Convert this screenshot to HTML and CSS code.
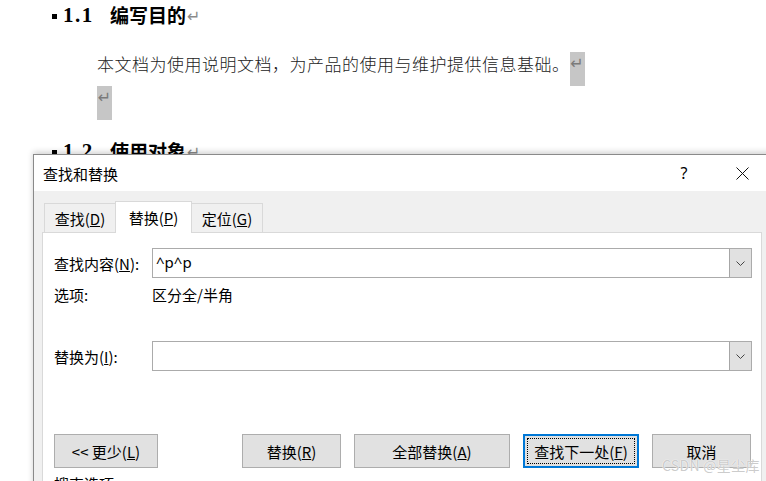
FILE: index.html
```html
<!DOCTYPE html>
<html lang="zh-CN">
<head>
<meta charset="utf-8">
<link rel="stylesheet" href="styles.css">
</head>
<body>
<div class="doc">
  <div class="h h1"><span class="bullet"></span><span class="num">1.1</span><span class="ht">编写目的</span><span class="ret">↵</span></div>
  <div class="para"><span class="ptext">本文档为使用说明文档，为产品的使用与维护提供信息基础。</span><span class="mark">↵</span></div>
  <div class="para"><span class="mark">↵</span></div>
  <div class="h h2"><span class="bullet"></span><span class="num">1.2</span><span class="ht">使用对象</span><span class="ret">↵</span></div>
</div>

<div class="dialog">
  <div class="titlebar">
    <span class="title">查找和替换</span>
    <span class="help">?</span>
    <span class="close"><svg width="13" height="13" viewBox="0 0 13 13"><path d="M0.5 0.5 L12.5 12.5 M12.5 0.5 L0.5 12.5" stroke="#111" stroke-width="1" fill="none"/></svg></span>
  </div>
  <div class="tabs">
    <div class="tab tab-first">查找(<u>D</u>)</div>
    <div class="tab tab-active">替换(<u>P</u>)</div>
    <div class="tab tab-last">定位(<u>G</u>)</div>
  </div>
  <div class="panel">
    <div class="row">
      <span class="label">查找内容(<u>N</u>):</span>
      <div class="combo"><span class="ctext">^p^p</span><span class="drop"><svg width="9" height="5" viewBox="0 0 9 5"><path d="M0.5 0.5 L4.5 4.5 L8.5 0.5" stroke="#444" stroke-width="1" fill="none"/></svg></span></div>
    </div>
    <div class="row opt">
      <span class="label">选项:</span>
      <span class="optval">区分全/半角</span>
    </div>
    <div class="row repl">
      <span class="label">替换为(<u>I</u>):</span>
      <div class="combo"><span class="ctext"></span><span class="drop"><svg width="9" height="5" viewBox="0 0 9 5"><path d="M0.5 0.5 L4.5 4.5 L8.5 0.5" stroke="#444" stroke-width="1" fill="none"/></svg></span></div>
    </div>
    <div class="buttons">
      <button class="btn b-less">&lt;&lt; 更少(<u>L</u>)</button>
      <div class="bgroup">
        <button class="btn b-rep">替换(<u>R</u>)</button>
        <button class="btn b-all">全部替换(<u>A</u>)</button>
        <button class="btn b-next">查找下一处(<u>F</u>)</button>
        <button class="btn b-cancel">取消</button>
      </div>
    </div>
    <div class="more">搜索选项</div>
    <div class="watermark">CSDN @星尘库</div>
  </div>
</div>
</body>
</html>
```

FILE: styles.css
```css
* { box-sizing: border-box; }
html, body {
  margin: 0;
  padding: 0;
  width: 766px;
  height: 481px;
  overflow: hidden;
  background: #fff;
}
body {
  position: relative;
  font-family: "Noto Sans CJK SC", sans-serif;
  color: #000;
}

/* document */
.h {
  display: flex;
  align-items: center;
  height: 30px;
  padding-left: 52px;
}
.bullet {
  width: 5px;
  height: 5px;
  background: #000;
  margin-top: 2px;
}
.num {
  width: 53px;
  padding-left: 6px;
  font-family: "Liberation Serif", serif;
  font-weight: bold;
  font-size: 21px;
  letter-spacing: 1.5px;
}
.ht {
  font-family: "Noto Sans CJK SC", sans-serif;
  font-weight: 700;
  font-size: 19px;
  line-height: 30px;
}
.ret {
  font-family: "DejaVu Sans", sans-serif;
  font-size: 16px;
  color: #8a8a8a;
  margin-left: 1px;
  margin-top: 2px;
}
.h2 { margin-top: 16px; }
.para {
  display: flex;
  align-items: flex-start;
  height: 34px;
  padding-left: 97px;
}
.h1 + .para { margin-top: 22px; }
.ptext {
  font-size: 17px;
  letter-spacing: 0.5px;
  line-height: 24px;
  color: #222;
  font-weight: 300;
}
.mark {
  display: block;
  width: 15px;
  height: 34px;
  background: #c6c6c6;
  font-family: "DejaVu Sans", sans-serif;
  font-size: 16px;
  line-height: 24px;
  color: #7a7a7a;
  text-align: center;
}

/* dialog */
.dialog {
  position: absolute;
  left: 33px;
  top: 154px;
  width: 740px;
  height: 345px;
  border: 1px solid #8a8a8a;
  background: #f0f0f0;
  box-shadow: 0 -2px 6px rgba(0,0,0,0.18);
  font-size: 15px;
}
.titlebar {
  height: 36px;
  background: #fff;
  display: flex;
  align-items: center;
  padding-left: 9px;
}
.title { font-size: 15px; }
.help {
  margin-left: auto;
  width: 20px;
  text-align: center;
  font-family: "Noto Sans", sans-serif;
  font-size: 16px;
}
.close {
  width: 20px;
  margin-left: 38px;
  margin-right: 20px;
  display: flex;
  justify-content: center;
}
.tabs {
  display: flex;
  align-items: flex-end;
  height: 31px;
  margin-top: 10px;
  padding-left: 10px;
}
.tab {
  height: 29px;
  display: flex;
  align-items: center;
  justify-content: center;
  border: 1px solid #d9d9d9;
  border-bottom: none;
  background: #f0f0f0;
  font-size: 15px;
}
.tab-first { width: 71px; border-right: none; }
.tab-active {
  width: 77px;
  height: 32px;
  margin-bottom: -1px;
  background: #fff;
  position: relative;
  z-index: 1;
  padding-bottom: 1px;
}
.tab-last { width: 71px; border-left: none; }
.panel {
  position: relative;
  margin-left: 8px;
  width: 720px;
  height: 300px;
  background: #fff;
  border: 1px solid #d9d9d9;
  padding: 15px 9px 0 11px;
}
.row {
  display: grid;
  grid-template-columns: 98px 600px;
  align-items: center;
  height: 30px;
}
.label { font-size: 15px; white-space: nowrap; }
.combo {
  display: flex;
  height: 30px;
  border: 1px solid #ababab;
  background: #fff;
}
.ctext {
  flex: 1;
  padding-left: 3px;
  font-family: "Noto Sans", sans-serif;
  font-size: 15px;
  line-height: 27px;
  color: #000;
}
.drop {
  width: 22px;
  background: #e1e1e1;
  border: 1px solid #a6a6a6;
  border-width: 0 0 0 1px;
  display: flex;
  align-items: center;
  justify-content: center;
}
.opt { height: 20px; margin-top: 6px; }
.optval { font-size: 15px; }
.repl { margin-top: 37px; }
.buttons {
  display: flex;
  margin-top: 63px;
}
.bgroup {
  display: flex;
  gap: 13px;
  margin-left: auto;
  margin-right: 1px;
}
.btn {
  height: 34px;
  background: #e1e1e1;
  border: 1px solid #adadad;
  font-family: "Noto Sans CJK SC", sans-serif;
  font-size: 15px;
  color: #000;
  padding: 0;
}
.b-less { width: 104px; }
.b-rep { width: 99px; }
.b-all { width: 156px; }
.b-next {
  width: 116px;
  border: 2px solid #0078d7;
  outline: 1px dotted #000;
  outline-offset: -5px;
}
.b-cancel { width: 99px; }
.more {
  margin-top: 6px;
  font-size: 15px;
  line-height: 20px;
}
.watermark {
  position: absolute;
  left: 619px;
  top: 222px;
  font-family: "Noto Sans CJK SC", sans-serif;
  font-size: 14px;
  color: rgba(160,160,160,0.55);
  text-shadow: 0 0 1px #fff, 0 0 1px #fff;
  letter-spacing: 0.3px;
}
```
